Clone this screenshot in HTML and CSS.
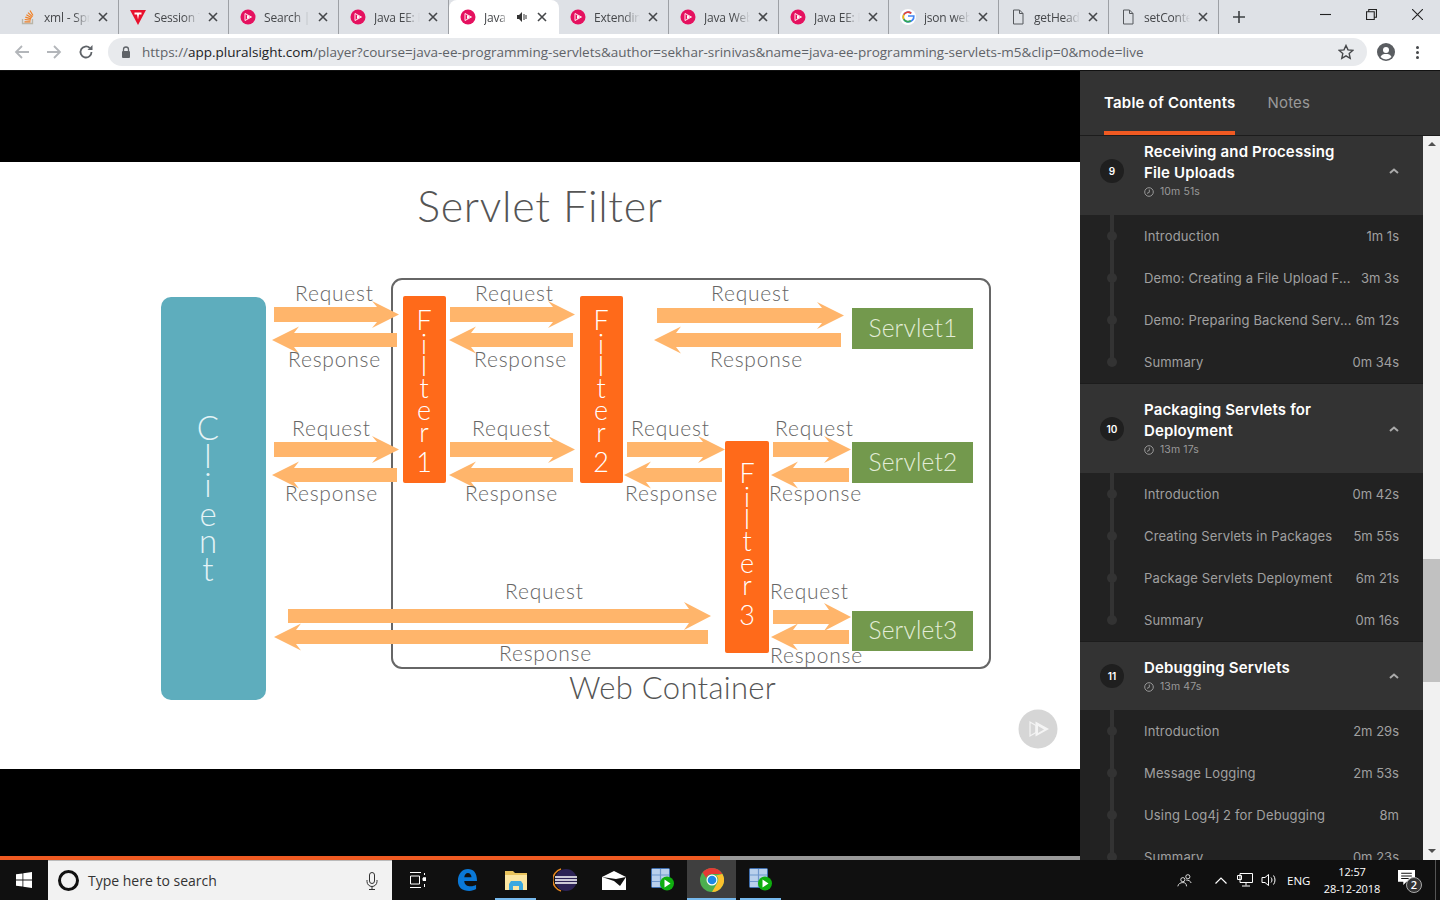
FILE: index.html
```html
<!DOCTYPE html>
<html lang="en">
<head>
    <meta charset="UTF-8">
    <meta name="viewport" content="width=device-width, initial-scale=1.0">
    <title>Java EE: Programming Servlets</title>
    <link rel="stylesheet" href="styles.css">
</head>
<body>
    <svg class="sprite" width="0" height="0">
        <symbol id="i-ps" viewBox="0 0 16 16">
            <circle cx="8" cy="8" r="7.5" fill="#e5115f"/>
            <path d="M5 4.500v7L11.500 8z" fill="none" stroke="#fff" stroke-width=".9"/>
            <path d="M7 6v4L10.400 8z" fill="#fff"/>
        </symbol>
        <symbol id="i-x" viewBox="0 0 10 10">
            <path d="M1 1l8 8M9 1L1 9" stroke="#45474a" stroke-width="1.600" fill="none"/>
        </symbol>
        <symbol id="i-doc" viewBox="0 0 16 16">
            <path d="M3.500 1h6l3.500 3.500V15h-9.500zM9.500 1v3.500H13" fill="none" stroke="#55585c" stroke-width="1"/>
        </symbol>
        <symbol id="i-app" viewBox="0 0 24 24">
            <rect x=".5" y=".5" width="18" height="19" rx="1" fill="#b9d0ec" stroke="#3f6fb0"/>
            <path d="M1 7h17M1 13.500h17M9.500 1v18" stroke="#6f97cc" stroke-width="1.200"/>
            <circle cx="16" cy="15.500" r="7" fill="#0fae0f"/>
            <path d="M13.500 11.500l6 4-6 4z" fill="#fff"/>
        </symbol>
        <symbol id="i-clock" viewBox="0 0 10 10">
            <circle cx="5" cy="5" r="4.300" fill="none" stroke="#999" stroke-width="1"/>
            <path d="M5.300 2.600V5.300L3 6.400" fill="none" stroke="#999" stroke-width="1"/>
        </symbol>
        <symbol id="i-up" viewBox="0 0 10 6">
            <path d="M1 5l4-3.500L9 5" fill="none" stroke="#aaa" stroke-width="2"/>
        </symbol>
    </svg>

    <header class="chrome">
        <div class="tabstrip">
            <div class="tab">
                <svg class="favicon" viewBox="0 0 16 16"><path d="M2.500 10v4.500h10V10" fill="none" stroke="#b9b5a8" stroke-width="1.300"/><path d="M4.500 12.800h6M4.700 10.500l6 .6M5.300 8.200l5.800 1.600M6.400 5.800l5.300 3M8 3.600l4.500 4.300M10 1.500l3 5" stroke="#f07f24" stroke-width="1.200"/></svg>
                <span class="tab-title">xml - Spring</span>
                <svg class="tab-x"><use href="#i-x"/></svg>
            </div>
            <div class="tab">
                <svg class="favicon" viewBox="0 0 16 16"><path d="M0 1h16L8 16z" fill="#e8112d"/><path d="M4.500 3.500h7v2H9l-1 5-1-5H4.500z" fill="#fff"/></svg>
                <span class="tab-title">Session Trac</span>
                <svg class="tab-x"><use href="#i-x"/></svg>
            </div>
            <div class="tab">
                <svg class="favicon"><use href="#i-ps"/></svg>
                <span class="tab-title">Search | Plur</span>
                <svg class="tab-x"><use href="#i-x"/></svg>
            </div>
            <div class="tab">
                <svg class="favicon"><use href="#i-ps"/></svg>
                <span class="tab-title">Java EE: Prog</span>
                <svg class="tab-x"><use href="#i-x"/></svg>
            </div>
            <div class="tab active">
                <svg class="favicon"><use href="#i-ps"/></svg>
                <span class="tab-title short">Java EE</span>
                <svg class="tab-audio" viewBox="0 0 12 12"><path d="M1 4h2l3-3v10L3 8H1z" fill="#333"/><path d="M8 3v6M10 4v4" stroke="#333" stroke-width="1"/></svg>
                <svg class="tab-x"><use href="#i-x"/></svg>
            </div>
            <div class="tab">
                <svg class="favicon"><use href="#i-ps"/></svg>
                <span class="tab-title">Extending Ja</span>
                <svg class="tab-x"><use href="#i-x"/></svg>
            </div>
            <div class="tab">
                <svg class="favicon"><use href="#i-ps"/></svg>
                <span class="tab-title">Java Web Fu</span>
                <svg class="tab-x"><use href="#i-x"/></svg>
            </div>
            <div class="tab">
                <svg class="favicon"><use href="#i-ps"/></svg>
                <span class="tab-title">Java EE: Prog</span>
                <svg class="tab-x"><use href="#i-x"/></svg>
            </div>
            <div class="tab">
                <svg class="favicon" viewBox="0 0 16 16">
                    <circle cx="8" cy="8" r="8" fill="#fff"/>
                    <path d="M8 7h5.800c.3 3.300-2 5.800-5.800 5.800a4.800 4.800 0 010-9.600c1.300 0 2.400.5 3.200 1.200" fill="none" stroke="#4285f4" stroke-width="1.700"/>
                    <path d="M11.200 4.400A4.800 4.800 0 003.800 5.700" fill="none" stroke="#ea4335" stroke-width="1.700"/>
                    <path d="M3.800 5.700a4.800 4.800 0 000 4.600" fill="none" stroke="#fbbc05" stroke-width="1.700"/>
                    <path d="M3.800 10.300a4.800 4.800 0 007 1.400" fill="none" stroke="#34a853" stroke-width="1.700"/>
                </svg>
                <span class="tab-title">json web tok</span>
                <svg class="tab-x"><use href="#i-x"/></svg>
            </div>
            <div class="tab">
                <svg class="favicon"><use href="#i-doc"/></svg>
                <span class="tab-title">getHeader</span>
                <svg class="tab-x"><use href="#i-x"/></svg>
            </div>
            <div class="tab">
                <svg class="favicon"><use href="#i-doc"/></svg>
                <span class="tab-title">setContentT</span>
                <svg class="tab-x"><use href="#i-x"/></svg>
            </div>
            <svg class="new-tab" viewBox="0 0 12 12"><path d="M6 0v12M0 6h12" stroke="#3c4043" stroke-width="1.600"/></svg>
            <div class="win-controls">
                <svg viewBox="0 0 10 10"><path d="M0 5h10" stroke="#222" stroke-width="1"/></svg>
                <svg viewBox="0 0 10 10"><path d="M.5 2.500h7v7h-7zM2.500 2.500V.5h7v7h-2" fill="none" stroke="#222" stroke-width="1"/></svg>
                <svg viewBox="0 0 10 10"><path d="M0 0l10 10M10 0L0 10" stroke="#222" stroke-width="1"/></svg>
            </div>
        </div>
        <div class="toolbar">
            <svg class="nav-btn" viewBox="0 0 16 16"><path d="M15 8H2M8 2L2 8l6 6" fill="none" stroke="#b3b6ba" stroke-width="1.800"/></svg>
            <svg class="nav-btn" viewBox="0 0 16 16"><path d="M1 8h13M8 2l6 6-6 6" fill="none" stroke="#b3b6ba" stroke-width="1.800"/></svg>
            <svg class="nav-btn" viewBox="0 0 16 16"><path d="M13.500 8a5.500 5.500 0 11-1.700-4" fill="none" stroke="#5f6368" stroke-width="1.800"/><path d="M14.500 1v5h-5z" fill="#5f6368"/></svg>
            <div class="omnibox">
                <svg class="lock" viewBox="0 0 10 12"><path d="M2.500 5V3.500a2.500 2.500 0 015 0V5" fill="none" stroke="#5f6368" stroke-width="1.300"/><rect x="1" y="5" width="8" height="7" rx="1" fill="#5f6368"/></svg>
                <span class="url">https://<b>app.pluralsight.com</b>/player?course=java-ee-programming-servlets&amp;author=sekhar-srinivas&amp;name=java-ee-programming-servlets-m5&amp;clip=0&amp;mode=live</span>
                <svg class="star" viewBox="0 0 16 16"><path d="M8 1.500l2 4.400 4.800.5-3.600 3.200 1 4.700L8 11.900l-4.200 2.400 1-4.700L1.200 6.400 6 5.900z" fill="none" stroke="#45474a" stroke-width="1.400"/></svg>
            </div>
            <svg class="avatar" viewBox="0 0 18 18"><circle cx="9" cy="9" r="9" fill="#5a5d61"/><circle cx="9" cy="7" r="3" fill="#fff"/><path d="M3.500 14c1-2.500 3-3 5.500-3s4.500.5 5.500 3a7.500 7.500 0 01-11 0z" fill="#fff"/></svg>
            <div class="menu-dots"><i></i><i></i><i></i></div>
        </div>
    </header>

    <main class="app">
        <section class="player">
            <div class="stage">
                <svg class="slide" viewBox="0 162 1080 607">
                    <text class="slide-title" x="540" y="222">Servlet Filter</text>

                    <rect class="client" x="161" y="297" width="105" height="403" rx="10"/>
                    <text class="client-text"><tspan x="208" y="440">C</tspan><tspan x="208" y="468">l</tspan><tspan x="208" y="497">i</tspan><tspan x="208" y="526">e</tspan><tspan x="208" y="553">n</tspan><tspan x="208" y="581">t</tspan></text>

                    <rect class="container" x="392" y="279" width="598" height="389" rx="10"/>

                    <!-- request arrows -->
                    <g class="arrows">
                        <polygon points="274,307 377,307 372,301 399,314.500 372,328 377,322 274,322"/>
                        <polygon points="450,307 553,307 548,301 575,314.500 548,328 553,322 450,322"/>
                        <polygon points="657,308 822,308 817,302 844,315.500 817,329 822,323 657,323"/>
                        <polygon points="274,442 377,442 372,436 399,449.500 372,463 377,457 274,457"/>
                        <polygon points="450,442 553,442 548,436 575,449.500 548,463 553,457 450,457"/>
                        <polygon points="627,442 703,442 698,436 725,449.500 698,463 703,457 627,457"/>
                        <polygon points="773,442 829,442 824,436 851,449.500 824,463 829,457 773,457"/>
                        <polygon points="288,609 689,609 684,602 711,616 684,630 689,623 288,623"/>
                        <polygon points="773,610 829,610 824,603 851,617 824,631 829,624 773,624"/>
                        <!-- response arrows -->
                        <polygon points="272,340 299,326.500 294,333 397,333 397,347 294,347 299,353.500"/>
                        <polygon points="449,340 476,326.500 471,333 573,333 573,347 471,347 476,353.500"/>
                        <polygon points="654,340 681,326.500 676,333 841,333 841,347 676,347 681,353.500"/>
                        <polygon points="272,475 299,461.500 294,468 397,468 397,482 294,482 299,488.500"/>
                        <polygon points="449,475 476,461.500 471,468 573,468 573,482 471,482 476,488.500"/>
                        <polygon points="624,475 651,461.500 646,468 722,468 722,482 646,482 651,488.500"/>
                        <polygon points="771,475 798,461.500 793,468 849,468 849,482 793,482 798,488.500"/>
                        <polygon points="274,637 301,623.500 296,630 708,630 708,644 296,644 301,650.500"/>
                        <polygon points="771,637 798,623.500 793,630 849,630 849,644 793,644 798,650.500"/>
                    </g>

                    <rect class="filter" x="403" y="296" width="43" height="187" rx="2"/>
                    <rect class="filter" x="580" y="296" width="43" height="187" rx="2"/>
                    <rect class="filter" x="725" y="441" width="44" height="212" rx="2"/>

                    <text class="filter-text"><tspan x="424" y="330">F</tspan><tspan x="424" y="354">i</tspan><tspan x="424" y="376">l</tspan><tspan x="424" y="398">t</tspan><tspan x="424" y="420">e</tspan><tspan x="424" y="442">r</tspan><tspan x="424" y="472">1</tspan></text>
                    <text class="filter-text"><tspan x="601" y="330">F</tspan><tspan x="601" y="354">i</tspan><tspan x="601" y="376">l</tspan><tspan x="601" y="398">t</tspan><tspan x="601" y="420">e</tspan><tspan x="601" y="442">r</tspan><tspan x="601" y="472">2</tspan></text>
                    <text class="filter-text"><tspan x="747" y="483">F</tspan><tspan x="747" y="507">i</tspan><tspan x="747" y="529">l</tspan><tspan x="747" y="551">t</tspan><tspan x="747" y="573">e</tspan><tspan x="747" y="595">r</tspan><tspan x="747" y="625">3</tspan></text>

                    <rect class="servlet" x="852" y="308" width="121" height="41"/>
                    <rect class="servlet" x="852" y="442" width="121" height="41"/>
                    <rect class="servlet" x="852" y="611" width="121" height="40"/>
                    <text class="servlet-text" x="913" y="337">Servlet1</text>
                    <text class="servlet-text" x="913" y="471">Servlet2</text>
                    <text class="servlet-text" x="913" y="639">Servlet3</text>

                    <text class="lbl" x="295" y="301">Request</text>
                    <text class="lbl" x="288" y="367">Response</text>
                    <text class="lbl" x="475" y="301">Request</text>
                    <text class="lbl" x="474" y="367">Response</text>
                    <text class="lbl" x="711" y="301">Request</text>
                    <text class="lbl" x="710" y="367">Response</text>
                    <text class="lbl" x="292" y="436">Request</text>
                    <text class="lbl" x="285" y="501">Response</text>
                    <text class="lbl" x="472" y="436">Request</text>
                    <text class="lbl" x="465" y="501">Response</text>
                    <text class="lbl" x="631" y="436">Request</text>
                    <text class="lbl" x="625" y="501">Response</text>
                    <text class="lbl" x="775" y="436">Request</text>
                    <text class="lbl" x="769" y="501">Response</text>
                    <text class="lbl" x="505" y="599">Request</text>
                    <text class="lbl" x="499" y="661">Response</text>
                    <text class="lbl" x="770" y="599">Request</text>
                    <text class="lbl" x="770" y="663">Response</text>

                    <text class="web-container" x="569" y="699">Web Container</text>

                    <circle cx="1038" cy="729" r="19.500" fill="#d6d6d6"/>
                    <path d="M1030 722v14l6-3.500v-7z" fill="none" stroke="#f4f4f4" stroke-width="1.200"/>
                    <path d="M1035.500 721.500v15l13.500-7.500zM1038 726l6 3.500-6 3.500z" fill="#f4f4f4" fill-rule="evenodd"/>
                </svg>
            </div>
            <div class="progress"><div class="progress-fill"></div></div>
        </section>

        <aside class="sidebar">
            <nav class="side-tabs">
                <a class="side-tab active">Table of Contents</a>
                <a class="side-tab">Notes</a>
            </nav>
            <div class="side-body">
                <div class="toc">
                    <section class="module">
                        <header class="module-head">
                            <span class="module-num">9</span>
                            <div class="module-info">
                                <h3>Receiving and Processing File Uploads</h3>
                                <p><svg class="clock"><use href="#i-clock"/></svg>10m 51s</p>
                            </div>
                            <svg class="chevron"><use href="#i-up"/></svg>
                        </header>
                        <ul class="clips">
                            <li><span>Introduction</span><em>1m 1s</em></li>
                            <li><span>Demo: Creating a File Upload F...</span><em>3m 3s</em></li>
                            <li><span>Demo: Preparing Backend Serv...</span><em>6m 12s</em></li>
                            <li><span>Summary</span><em>0m 34s</em></li>
                        </ul>
                    </section>
                    <section class="module">
                        <header class="module-head">
                            <span class="module-num">10</span>
                            <div class="module-info">
                                <h3>Packaging Servlets for Deployment</h3>
                                <p><svg class="clock"><use href="#i-clock"/></svg>13m 17s</p>
                            </div>
                            <svg class="chevron"><use href="#i-up"/></svg>
                        </header>
                        <ul class="clips">
                            <li><span>Introduction</span><em>0m 42s</em></li>
                            <li><span>Creating Servlets in Packages</span><em>5m 55s</em></li>
                            <li><span>Package Servlets Deployment</span><em>6m 21s</em></li>
                            <li><span>Summary</span><em>0m 16s</em></li>
                        </ul>
                    </section>
                    <section class="module">
                        <header class="module-head">
                            <span class="module-num">11</span>
                            <div class="module-info">
                                <h3>Debugging Servlets</h3>
                                <p><svg class="clock"><use href="#i-clock"/></svg>13m 47s</p>
                            </div>
                            <svg class="chevron"><use href="#i-up"/></svg>
                        </header>
                        <ul class="clips">
                            <li><span>Introduction</span><em>2m 29s</em></li>
                            <li><span>Message Logging</span><em>2m 53s</em></li>
                            <li><span>Using Log4j 2 for Debugging</span><em>8m</em></li>
                            <li><span>Summary</span><em>0m 23s</em></li>
                        </ul>
                    </section>
                </div>
                <div class="scrollbar">
                    <span class="arrow-up"></span>
                    <div class="thumb"></div>
                    <span class="arrow-down"></span>
                </div>
            </div>
        </aside>
    </main>

    <footer class="taskbar">
        <svg class="start" viewBox="0 0 16 16"><path d="M0 2.300l6.500-.9v6.200H0zM7.300 1.300L16 0v7.600H7.300zM0 8.400h6.500v6.200L0 13.700zM7.300 8.400H16V16l-8.700-1.300z" fill="#fff"/></svg>
        <div class="search">
            <span class="cortana"></span>
            <span class="search-text">Type here to search</span>
            <svg class="mic" viewBox="0 0 12 18"><rect x="3.500" y=".5" width="5" height="11" rx="2.500" fill="none" stroke="#333"/><path d="M1 8v1.500a5 5 0 0010 0V8M6 14.500V17M3 17.500h6" fill="none" stroke="#333"/></svg>
        </div>
        <div class="task-icons">
            <div class="task-icon">
                <svg viewBox="0 0 17 16" width="17" height="16"><path d="M1 .5h11M1 15.500h11M1.500 4h9v8h-9zM15.500 1v2M14 6h3v2.500h-3zM15.500 12v3" fill="none" stroke="#fff" stroke-width="1"/><rect x="14" y="5.500" width="3" height="3" fill="#fff"/></svg>
            </div>
            <div class="task-icon">
                <svg viewBox="0 0 22 24" width="20" height="22"><path d="M1 13C1 5 6 0 12 0c6 0 10 4 10 13H8c.2 4 3 6 7 6 2.500 0 4.500-.7 6-1.700V22c-2 1.300-4.500 2-7.500 2C6 24 1 20 1 13zM8 9h8c-.2-3-1.800-4.800-4-4.800S8.300 6 8 9z" fill="#0a78d7"/></svg>
            </div>
            <div class="task-icon open">
                <svg viewBox="0 0 22 19" width="22" height="19"><path d="M0 0h8l2 2h12v17H0z" fill="#e8c35c"/><path d="M0 4h22v15H0z" fill="#fbe6a2"/><path d="M4 19v-6l2-3h10l2 3v6h-4v-4H8v4z" fill="#3aa8e0"/></svg>
            </div>
            <div class="task-icon">
                <svg viewBox="0 0 24 24" width="24" height="24"><path d="M8 1a11.500 11.500 0 000 22" fill="none" stroke="#e8871e" stroke-width="1.500"/><circle cx="13" cy="12" r="11" fill="#2c2255"/><path d="M2 9h22M2 12h22M2 15h22" stroke="#fff" stroke-width="1.500"/></svg>
            </div>
            <div class="task-icon">
                <svg viewBox="0 0 24 19" width="24" height="19"><path d="M0 6l12-6 12 6v13H0z" fill="#fff"/><path d="M0 6l14 2 4 7-6-5zM24 6l-10 2 4 7z" fill="#111"/></svg>
            </div>
            <div class="task-icon">
                <svg class="app-icon"><use href="#i-app"/></svg>
            </div>
            <div class="task-icon open current">
                <svg viewBox="0 0 24 24" width="24" height="24">
                    <circle cx="12" cy="12" r="12" fill="#4caf50"/>
                    <path d="M12 0a12 12 0 0110.400 6H12a6 6 0 00-5.700 4L2.600 4.500A12 12 0 0112 0z" fill="#e53935"/>
                    <path d="M22.400 6A12 12 0 0112 24l5.200-9A6 6 0 0016 7.500z" fill="#fbc02d"/>
                    <circle cx="12" cy="12" r="5.500" fill="#fff"/>
                    <circle cx="12" cy="12" r="4.300" fill="#1e88e5"/>
                </svg>
            </div>
            <div class="task-icon open">
                <svg class="app-icon"><use href="#i-app"/></svg>
            </div>
        </div>
        <div class="tray">
            <svg class="tray-people" viewBox="0 0 18 16"><circle cx="7" cy="7" r="2.500" fill="none" stroke="#fff"/><circle cx="13" cy="3.500" r="2.500" fill="none" stroke="#fff"/><path d="M1 15c.5-3 3-4.500 6-4.500s4 1 4.500 4.500M11 7.500c3 0 5 1 6 3.500" fill="none" stroke="#fff"/></svg>
            <svg class="tray-caret" viewBox="0 0 12 7"><path d="M.5 6.500L6 1l5.500 5.500" fill="none" stroke="#fff" stroke-width="1.200"/></svg>
            <svg class="tray-net" viewBox="0 0 16 14"><path d="M3 .5h12.500v9H3zM.5 2.500h4v4h-4zM9 9.500v3M5 13h8" fill="#111" stroke="#fff"/></svg>
            <svg class="tray-sound" viewBox="0 0 16 14"><path d="M1 4.500h3L7.500 1.500v11L4 9.500H1zM10 4.500c1.300 1.500 1.300 3.500 0 5M12.500 2.500c2 2.500 2 6.500 0 9" fill="none" stroke="#fff"/></svg>
            <span class="tray-lang">ENG</span>
            <div class="tray-clock"><span>12:57</span><span>28-12-2018</span></div>
            <div class="tray-note">
                <svg viewBox="0 0 16 14"><path d="M0 0h16v11H8l-3 3v-3H0z" fill="#fff"/><path d="M3 3h10M3 5.500h10M3 8h7" stroke="#111"/></svg>
                <span class="note-badge">2</span>
            </div>
        </div>
    </footer>
</body>
</html>
```
FILE: styles.css
```css
* {
    box-sizing: border-box;
}

body {
    margin: 0;
    height: 100vh;
    overflow: hidden;
    display: flex;
    flex-direction: column;
    background: #000;
    font-family: "Inter", "Liberation Sans", sans-serif;
}

.sprite {
    position: absolute;
}

/* browser chrome */
.chrome {
    flex: none;
    height: 71px;
    font-family: "Open Sans", "Liberation Sans", sans-serif;
    background: #fff;
    border-bottom: 1px solid #111;
}

.tabstrip {
    height: 34px;
    padding-left: 9px;
    display: flex;
    align-items: center;
    background: #dee1e6;
}

.tab {
    width: 110px;
    height: 34px;
    padding: 0 10px 0 11px;
    display: flex;
    align-items: center;
    border-right: 1px solid #9da0a5;
    font-size: 12px;
    letter-spacing: -.2px;
    color: #45474a;
}

.tab.active {
    background: #fff;
    border-right: none;
    border-radius: 8px 8px 0 0;
}

.favicon {
    flex: none;
    width: 16px;
    height: 16px;
    margin-right: 8px;
}

.tab-title {
    flex: 1;
    overflow: hidden;
    white-space: nowrap;
    -webkit-mask-image: linear-gradient(90deg, #000 65%, transparent);
    mask-image: linear-gradient(90deg, #000 65%, transparent);
}

.tab-title.short {
    flex: none;
    width: 24px;
}

.tab-audio {
    flex: none;
    width: 12px;
    height: 12px;
    margin: 0 9px 0 8px;
}

.tab-x {
    flex: none;
    width: 10px;
    height: 10px;
    margin-left: 8px;
}

.tab.active .tab-x {
    margin-left: 0;
}

.new-tab {
    width: 12px;
    height: 12px;
    margin-left: 14px;
}

.win-controls {
    margin-left: auto;
    padding-right: 17px;
    display: flex;
    gap: 35px;
    align-self: flex-start;
    margin-top: 9px;
}

.win-controls svg {
    width: 11px;
    height: 11px;
}

.toolbar {
    height: 36px;
    padding-left: 14px;
    display: flex;
    align-items: center;
}

.nav-btn {
    flex: none;
    width: 16px;
    height: 16px;
    margin-right: 16px;
}

.omnibox {
    width: 1259px;
    height: 28px;
    margin-left: -2px;
    padding: 0 13px;
    display: flex;
    align-items: center;
    border-radius: 14px;
    background: #e8eaed;
}

.lock {
    flex: none;
    width: 10px;
    height: 12px;
    margin-right: 11px;
}

.url {
    flex: 1;
    white-space: nowrap;
    font-size: 13.500px;
    color: #5f6368;
}

.url b {
    font-weight: 400;
    color: #202124;
}

.star {
    flex: none;
    width: 16px;
    height: 16px;
}

.avatar {
    flex: none;
    width: 18px;
    height: 18px;
    margin-left: 10px;
}

.menu-dots {
    margin-left: 21px;
    display: flex;
    flex-direction: column;
    gap: 2px;
}

.menu-dots i {
    width: 3px;
    height: 3px;
    border-radius: 50%;
    background: #45474a;
}

/* player */
.app {
    flex: 1;
    min-height: 0;
    display: flex;
}

.player {
    width: 1080px;
    display: flex;
    flex-direction: column;
    background: #000;
}

.stage {
    flex: 1;
    padding-top: 91px;
}

.slide {
    display: block;
    width: 1080px;
    height: 607px;
    background: #fff;
    font-family: "Lato", sans-serif;
    font-weight: 300;
}

.slide-title {
    font-size: 43px;
    fill: #555;
    text-anchor: middle;
    letter-spacing: .7px;
}

.client {
    fill: #5eadbd;
}

.client-text {
    font-size: 33px;
    fill: #e4f3f6;
    text-anchor: middle;
}

.container {
    fill: none;
    stroke: #666;
    stroke-width: 2;
}

.arrows polygon {
    fill: #ffb56b;
}

.filter {
    fill: #ff6a1a;
}

.filter-text {
    font-size: 27px;
    fill: #fff;
    text-anchor: middle;
}

.servlet {
    fill: #73994d;
}

.servlet-text {
    font-size: 24.500px;
    fill: #e3edd8;
    text-anchor: middle;
    letter-spacing: .2px;
}

.lbl {
    font-size: 21px;
    fill: #666;
    letter-spacing: .8px;
}

.web-container {
    font-size: 31px;
    fill: #555;
    letter-spacing: .3px;
}

.progress {
    flex: none;
    height: 4px;
    background: #999;
}

.progress-fill {
    width: 720px;
    height: 100%;
    background: #f05a22;
}

/* table of contents */
.sidebar {
    flex: 1;
    min-width: 0;
    display: flex;
    flex-direction: column;
    background: #333;
}

.side-tabs {
    flex: none;
    height: 65px;
    padding-left: 24px;
    display: flex;
    gap: 32px;
    border-bottom: 1px solid #1c1c1c;
}

.side-tab {
    height: 64px;
    padding-top: 23px;
    font-size: 15px;
    line-height: 18px;
    letter-spacing: .2px;
    color: #999;
}

.side-tab.active {
    font-weight: 600;
    color: #fff;
    border-bottom: 4px solid #f05a22;
}

.side-body {
    flex: 1;
    min-height: 0;
    display: flex;
}

.toc {
    flex: 1;
    min-width: 0;
    overflow: hidden;
}

.toc .module:first-child {
    margin-top: -11px;
}

.module-head {
    padding: 15px 24px 15px 20px;
    display: flex;
    align-items: center;
    background: #333;
    border-top: 1px solid #1c1c1c;
}

.module-num {
    flex: none;
    width: 24px;
    height: 24px;
    margin-right: 20px;
    border-radius: 50%;
    background: #1f1f1f;
    color: #fff;
    font-size: 10px;
    font-weight: 600;
    line-height: 24px;
    text-align: center;
}

.module-info {
    flex: 1;
    min-width: 0;
}

.module-info h3 {
    margin: 0;
    font-size: 15px;
    font-weight: 600;
    line-height: 21px;
    letter-spacing: .15px;
    color: #fff;
    max-width: 215px;
}

.module-info p {
    margin: 0;
    display: flex;
    align-items: center;
    font-size: 10.500px;
    line-height: 17px;
    letter-spacing: .1px;
    color: #999;
}

.clock {
    width: 10px;
    height: 10px;
    margin-right: 6px;
}

.chevron {
    flex: none;
    width: 10px;
    height: 6px;
}

.clips {
    margin: 0;
    padding: 0;
    list-style: none;
    background: #222;
}

.clips li {
    position: relative;
    height: 42px;
    padding: 0 24px 0 64px;
    display: flex;
    align-items: center;
    justify-content: space-between;
    font-size: 13px;
    letter-spacing: .15px;
    color: #a0a0a0;
}

.clips li::before {
    content: "";
    position: absolute;
    left: 30px;
    top: 0;
    bottom: 0;
    width: 4px;
    background: #333;
}

.clips li:last-child::before {
    bottom: 50%;
}

.clips li::after {
    content: "";
    position: absolute;
    left: 27px;
    top: 16px;
    width: 10px;
    height: 10px;
    border-radius: 50%;
    background: #333;
}

.clips span {
    white-space: nowrap;
}

.clips em {
    font-style: normal;
    letter-spacing: 0;
}

.scrollbar {
    flex: none;
    width: 17px;
    display: flex;
    flex-direction: column;
    align-items: center;
    background: #f1f1f1;
}

.arrow-up,
.arrow-down {
    width: 0;
    height: 0;
    border-left: 4px solid transparent;
    border-right: 4px solid transparent;
}

.arrow-up {
    margin-top: 6px;
    border-bottom: 4px solid #505050;
}

.arrow-down {
    margin-top: auto;
    margin-bottom: 7px;
    border-top: 4px solid #505050;
}

.thumb {
    width: 100%;
    height: 123px;
    margin-top: 413px;
    background: #c1c1c1;
}

/* windows taskbar */
.taskbar {
    flex: none;
    height: 40px;
    display: flex;
    align-items: center;
    background: #101010;
    font-family: "Open Sans", "Liberation Sans", sans-serif;
}

.start {
    flex: none;
    width: 16px;
    height: 16px;
    margin: 0 16px;
}

.search {
    width: 344px;
    height: 40px;
    padding: 0 14px 0 10px;
    display: flex;
    align-items: center;
    background: #f2f2f2;
    border-top: 1px solid #bbb;
}

.cortana {
    width: 21px;
    height: 21px;
    border: 3px solid #111;
    border-radius: 50%;
    margin-right: 9px;
}

.search-text {
    flex: 1;
    font-size: 14px;
    color: #333;
}

.mic {
    width: 12px;
    height: 18px;
}

.task-icons {
    display: flex;
    margin-left: 1px;
    height: 40px;
}

.task-icon {
    width: 49px;
    height: 40px;
    display: flex;
    align-items: center;
    justify-content: center;
    position: relative;
}

.app-icon {
    width: 24px;
    height: 24px;
}

.task-icon.open::after {
    content: "";
    position: absolute;
    left: 4px;
    right: 4px;
    bottom: 0;
    height: 2px;
    background: #76b9ed;
}

.task-icon.current {
    background: #3f3f3f;
}

.task-icon.current::after {
    left: 0;
    right: 0;
}

.tray {
    margin-left: auto;
    height: 40px;
    padding-right: 12px;
    display: flex;
    align-items: center;
    color: #fff;
    border-right: 1px solid #555;
    margin-right: 4px;
}

.tray-people {
    width: 15px;
    height: 15px;
    margin-right: 23px;
}

.tray-caret {
    width: 12px;
    height: 7px;
    margin-right: 10px;
}

.tray-net {
    width: 16px;
    height: 14px;
    margin-right: 8px;
}

.tray-sound {
    width: 16px;
    height: 14px;
    margin-right: 10px;
}

.tray-lang {
    width: 23px;
    font-size: 11.500px;
    margin-right: 13px;
}

.tray-clock {
    width: 58px;
    display: flex;
    flex-direction: column;
    align-items: center;
    font-size: 11px;
    line-height: 17px;
    letter-spacing: -.1px;
    white-space: nowrap;
    margin-right: 17px;
}

.tray-note {
    position: relative;
    width: 25px;
    height: 24px;
}

.tray-note svg {
    width: 17px;
    height: 15px;
    display: block;
    margin-top: 2px;
}

.note-badge {
    position: absolute;
    left: 8px;
    top: 9px;
    width: 16px;
    height: 16px;
    border-radius: 50%;
    border: 1px solid #aaa;
    background: #333;
    font-size: 11px;
    font-weight: 600;
    line-height: 14px;
    text-align: center;
}
```
